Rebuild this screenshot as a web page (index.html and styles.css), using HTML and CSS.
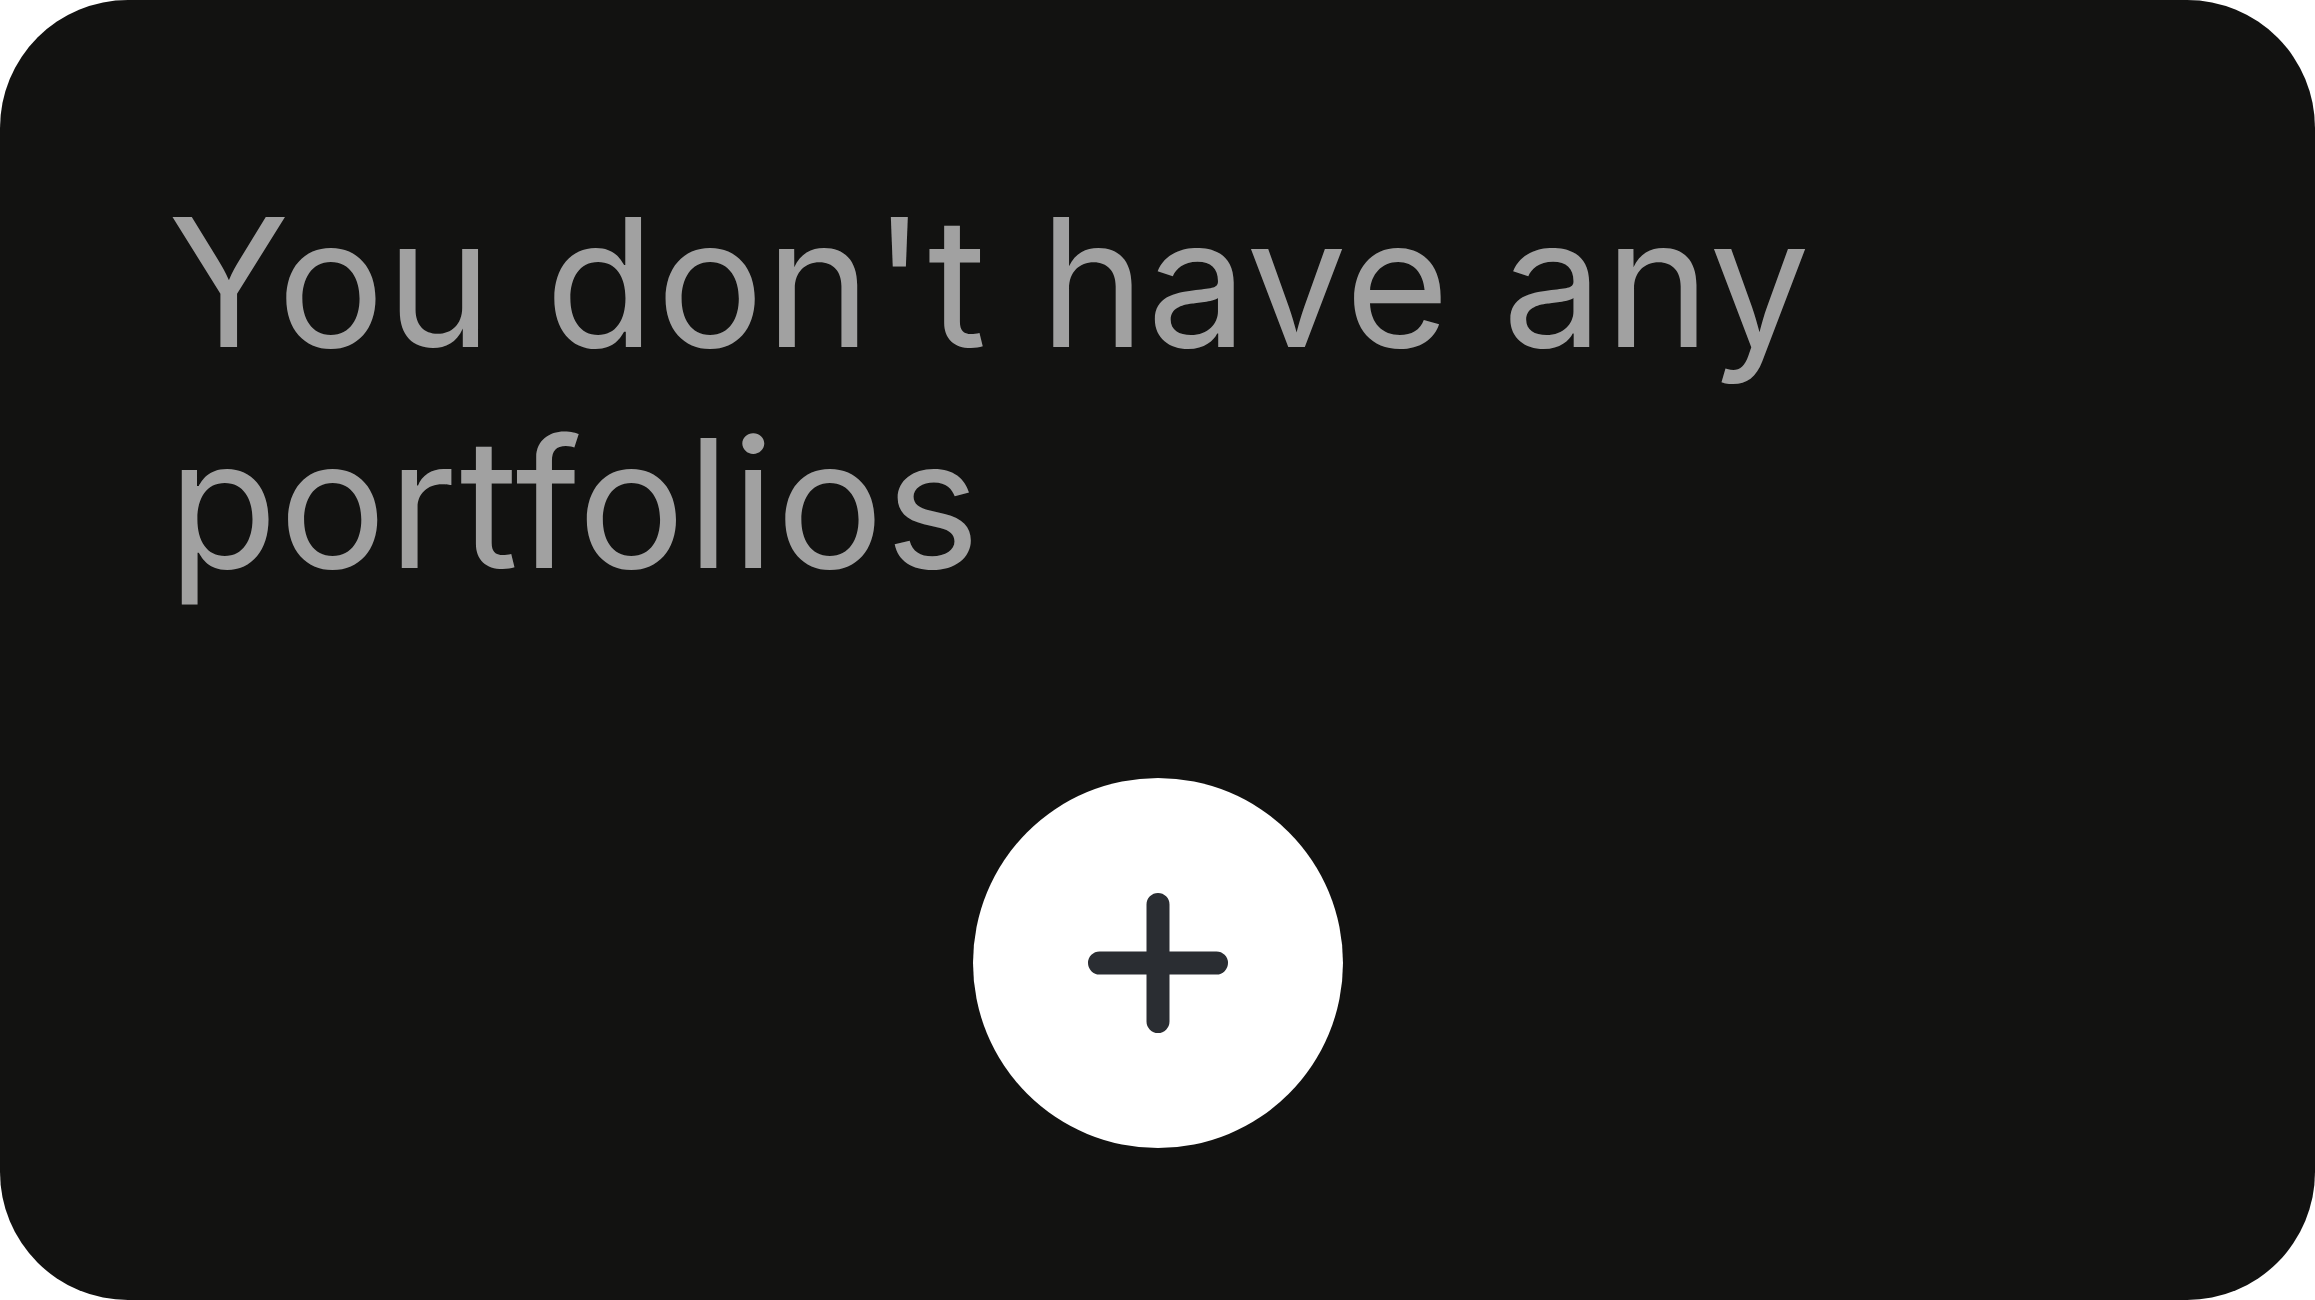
FILE: index.html
```html
<!DOCTYPE html>
<html lang="en">
<head>
<meta charset="utf-8">
<title>Portfolios</title>
<link rel="stylesheet" href="styles.css">
</head>
<body>
<main class="card">
  <p class="empty-text">You don't have any portfolios</p>
  <div class="actions">
    <button class="add-btn" aria-label="Add portfolio">
      <svg class="plus" viewBox="0 0 140 140" width="140" height="140" aria-hidden="true">
        <path d="M70 11.5V128.5M11.5 70H128.5" stroke="#2a2d32" stroke-width="23" stroke-linecap="round" fill="none"/>
      </svg>
    </button>
  </div>
</main>
</body>
</html>
```
FILE: styles.css
```css
html, body {
  margin: 0;
  padding: 0;
  background: #ffffff;
}
.card {
  box-sizing: border-box;
  width: 2315px;
  height: 1300px;
  background: #121211;
  border-radius: 128px;
  padding: 172px 160px 0 168px;
  display: flex;
  flex-direction: column;
}
.empty-text {
  margin: 0;
  max-width: 1700px;
  font-family: Inter, "Noto Sans", sans-serif;
  font-size: 179px;
  line-height: 221px;
  letter-spacing: 1.5px;
  color: #a1a1a1;
  font-weight: 400;
}
.actions {
  display: flex;
  justify-content: center;
  margin-top: 164px;
  margin-left: -168px;
  margin-right: -160px;
}
.add-btn {
  width: 370px;
  height: 370px;
  border-radius: 50%;
  border: none;
  background: #ffffff;
  padding: 0;
  display: flex;
  align-items: center;
  justify-content: center;
  cursor: pointer;
}
.plus {
  display: block;
}
```
